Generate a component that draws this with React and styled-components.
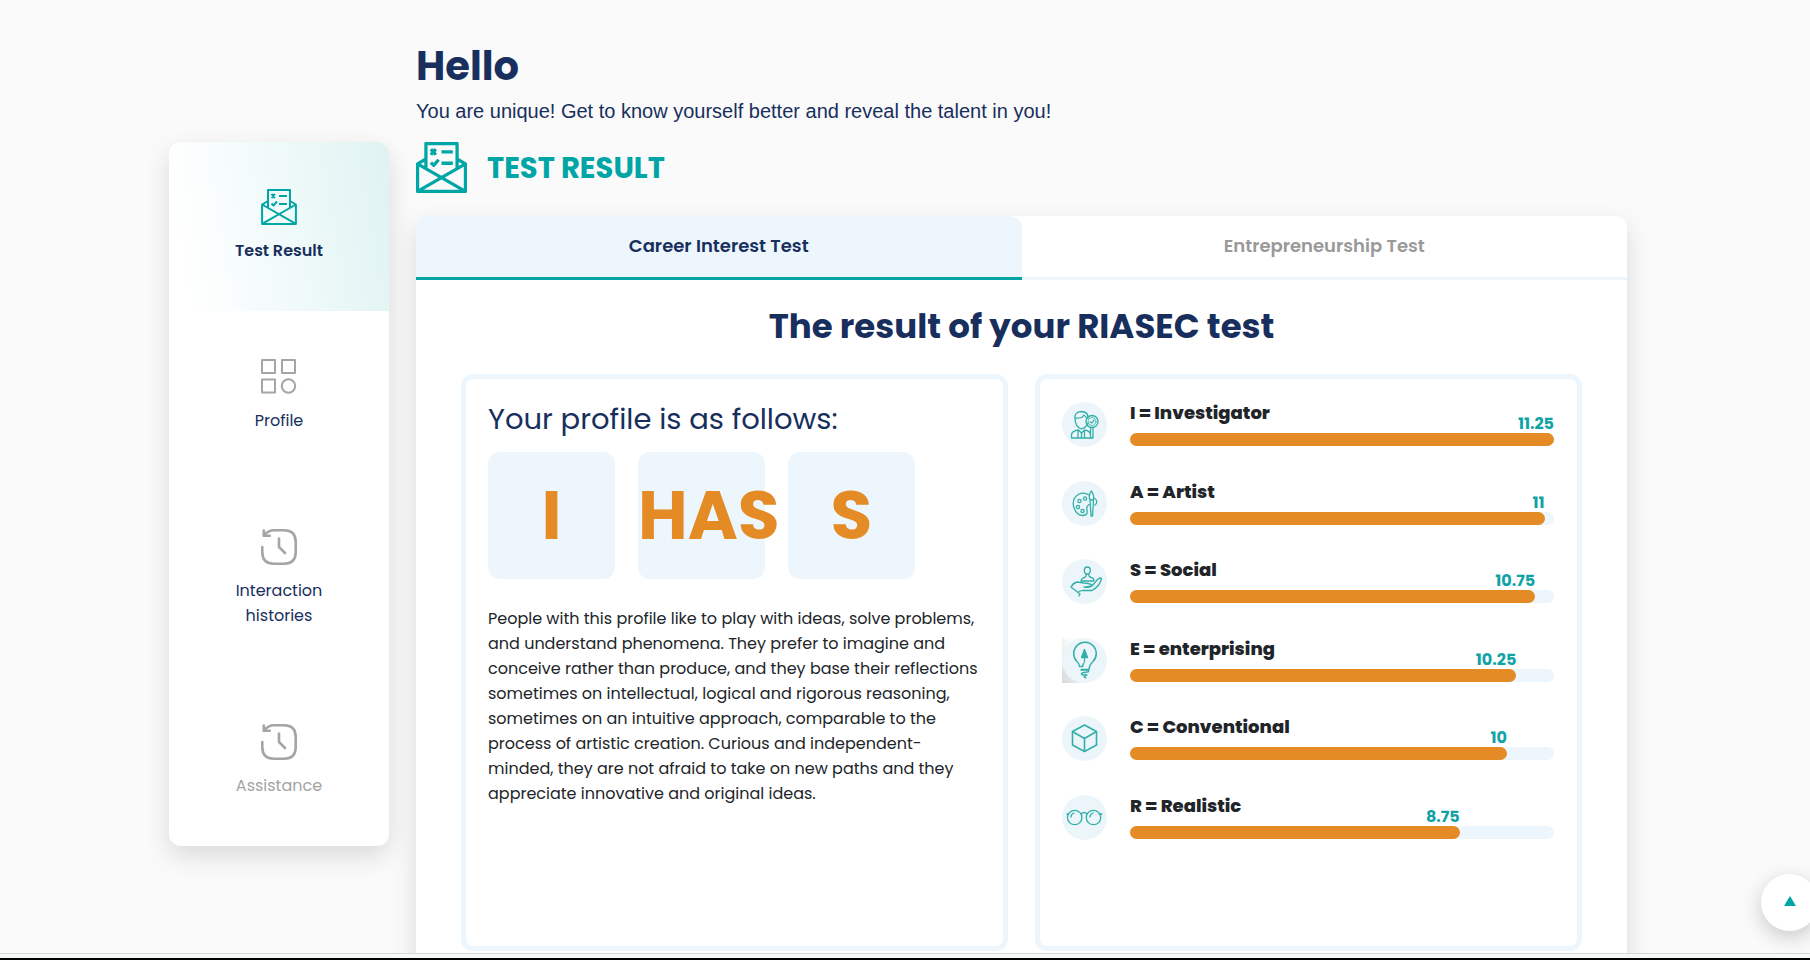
import React, { useState } from "react";
import styled, { createGlobalStyle } from "styled-components";

const navy = "#182f5d";
const teal = "#00a5a6";
const orange = "#e48b25";
const pale = "#ecf6fc";
const shadow = "0 10px 26px rgba(0, 0, 0, 0.13)";

const GlobalStyle = createGlobalStyle`
  * { box-sizing: border-box; }
  body {
    margin: 0;
    background: #fafafa;
    color: #212529;
    font-family: Poppins, Inter, "Open Sans", sans-serif;
    font-size: 16px;
  }
  h1, h2, h3, p, ul { margin: 0; padding: 0; }
`;

const Page = styled.div`
  height: 100vh;
  display: flex;
  flex-direction: column;
`;

const Viewport = styled.div`
  flex: 1;
  min-height: 0;
  overflow: hidden;
  padding-right: 14px;
`;

const BottomEdge = styled.div`
  height: 7px;
  flex: none;
  background: #f7f8f8;
  border-top: 1px solid #d5d8d8;
  border-bottom: 2px solid #000;
`;

const Container = styled.div`
  display: flex;
  align-items: flex-start;
  gap: 27px;
  max-width: 1458px;
  margin: 0 auto;
`;

const Sidebar = styled.nav`
  flex: none;
  width: 220px;
  margin-top: 142px;
  display: flex;
  flex-direction: column;
  gap: 1px;
  overflow: hidden;
  background: #fff;
  border-radius: 12px;
  box-shadow: ${shadow};
`;

const SideLink = styled.a`
  display: flex;
  flex-direction: column;
  align-items: center;
  gap: 13px;
  padding: 47px 50px 48px;
  text-align: center;
  text-decoration: none;
  font-size: 16px;
  line-height: 25px;
  font-weight: ${(p) => (p.$active ? 600 : 400)};
  color: ${(p) => (p.$muted ? "#a3a3a3" : navy)};
  background: ${(p) =>
    p.$active ? "linear-gradient(80deg, #fff 8%, #f1fafa 50%, #dff3f2 100%)" : "none"};
  svg { color: ${(p) => (p.$active ? teal : "#a5a5a5")}; }
`;

const Main = styled.main`
  flex: 1;
  min-width: 0;
  padding-top: 42px;
`;

const Hello = styled.h1`
  font-size: 40px;
  line-height: 48px;
  font-weight: 700;
  color: ${navy};
`;

const Intro = styled.p`
  margin-top: 6px;
  font-family: "Liberation Sans", Arial, sans-serif;
  font-size: 20px;
  line-height: 30px;
  color: ${navy};
`;

const SectionHead = styled.div`
  display: flex;
  align-items: center;
  gap: 20px;
  margin: 16px 0 23px;
  color: ${teal};
`;

const SectionTitle = styled.h2`
  font-size: 29px;
  line-height: 36px;
  font-weight: 700;
`;

const Card = styled.section`
  background: #fff;
  border-radius: 12px 12px 0 0;
  box-shadow: ${shadow};
`;

const Tabs = styled.div`
  display: flex;
`;

const Tab = styled.button`
  flex: 1;
  height: 64px;
  padding: 0 0 2px;
  border: 0;
  border-bottom: 3px solid ${(p) => (p.$active ? teal : pale)};
  border-radius: 12px 12px 0 0;
  background: ${(p) => (p.$active ? pale : "#fff")};
  color: ${(p) => (p.$active ? navy : "#999")};
  font: 600 18px/25px Poppins, Inter, sans-serif;
  cursor: pointer;
`;

const CardBody = styled.div`
  padding: 21px 45px 45px;
`;

const ResultTitle = styled.h2`
  text-align: center;
  font-size: 34px;
  line-height: 50px;
  font-weight: 700;
  color: ${navy};
`;

const Panels = styled.div`
  display: grid;
  grid-template-columns: 1fr 1fr;
  gap: 27px;
  margin-top: 23px;
`;

const Panel = styled.div`
  min-height: 577px;
  padding: 22px 23px 22px 22px;
  border: 5px solid ${pale};
  border-radius: 12px;
`;

const ProfileTitle = styled.h3`
  font-size: 29px;
  line-height: 36px;
  font-weight: 400;
  color: ${navy};
`;

const Tiles = styled.div`
  display: flex;
  gap: 23px;
  margin: 15px 0 27px;
`;

const Tile = styled.div`
  width: 127px;
  height: 127px;
  border-radius: 12px;
  background: ${pale};
  color: ${orange};
  font-size: 68px;
  line-height: 127px;
  font-weight: 700;
  text-align: center;
`;

const Description = styled.p`
  font-size: 16px;
  line-height: 25px;
`;

const Scores = styled.ul`
  display: flex;
  flex-direction: column;
  justify-content: space-between;
  height: 438px;
  margin-top: 1px;
  list-style: none;
`;

const ScoreRow = styled.li`
  display: flex;
  gap: 23px;
`;

const ScoreBody = styled.div`
  flex: 1;
`;

const ScoreHead = styled.div`
  display: grid;
  height: 31px;
`;

const ScoreName = styled.span`
  grid-area: 1 / 1;
  font-size: 18px;
  line-height: 22px;
  font-weight: 800;
`;

const ScoreValue = styled.span`
  grid-area: 1 / 1;
  align-self: end;
  text-align: right;
  font-size: 16px;
  line-height: 19px;
  font-weight: 700;
  color: #10a3a5;
`;

const Track = styled.div`
  height: 13px;
  border-radius: 7px;
  background: ${pale};
`;

const Fill = styled.div`
  height: 100%;
  border-radius: 7px;
  background: ${orange};
`;

const ToTop = styled.button`
  position: fixed;
  right: -8px;
  bottom: 29px;
  display: grid;
  place-items: center;
  width: 57px;
  height: 57px;
  padding: 0 0 3px;
  border: 0;
  border-radius: 50%;
  background: #fff;
  box-shadow: 0 6px 20px rgba(0, 0, 0, 0.2);
  cursor: pointer;
`;

const Envelope = ({ size, weight = 2 }) => (
  <svg width={size} height={size} viewBox="0 0 36 36" fill="none" stroke="currentColor" strokeWidth={weight} strokeLinejoin="round" aria-hidden="true">
    <path d="M7 19V1.100h22v17.900M7 12l-5.900 3.500V34.900h33.800V15.500l-5.900-3.500M1.100 15.500l33.800 19.400M34.900 15.500L1.100 34.900" />
    <path d="M10.500 5l3.500 4M14 5l-3.500 4M10.500 14.500l2 2 3.500-4M18 7h8M18 15h8" />
  </svg>
);

const Modules = () => (
  <svg width="36" height="36" viewBox="0 0 36 36" fill="none" stroke="currentColor" strokeWidth="2" strokeLinejoin="round" aria-hidden="true">
    <path d="M1 1h13v13H1zM21 1h13v13H21zM1 20.500h13v13H1z" />
    <circle cx="27.500" cy="27" r="6.700" />
  </svg>
);

const History = () => (
  <svg width="36" height="36" viewBox="0 0 36 36" fill="none" stroke="currentColor" strokeWidth="2.600" strokeLinecap="round" strokeLinejoin="round" aria-hidden="true">
    <path d="M1.300 18v5q0 11.700 11.700 11.700h10q11.700 0 11.700-11.700V13q0-11.700-11.700-11.700H13Q7 1.300 3 6.500" />
    <path d="M2.800 1.500v5.300h6M18 9.500V18l6 6" />
  </svg>
);

const drawings = {
  investigator: (
    <>
      <path d="M13 17q-1-7 6.500-7.500Q26 10 26 15M13 16q7 1 9-3 2 3 4 3M13 16q0 9 6.500 11Q25 25 26 21M9.500 36v-3q0-4 7-5l3 3 3-3q6 1 6 5v3zM16 28v8M22.500 28v8M19.500 31v5M28.500 25.500V36h2.500V25.500" />
      <circle cx="30" cy="19.500" r="6" />
      <circle cx="30" cy="19.500" r="4" strokeWidth="0.800" />
      <path d="M28 20l2 1 2-3" />
    </>
  ),
  artist: (
    <>
      <path d="M27 14q-5-3-10-1-7 4-5.500 12Q14 34.500 21 34.500q5-.5 4-5-1-4 2-6M29.500 10q-4 5-1 9h2.500q2-4-1.500-9zM28 19l1 16h1.500l1-16M32 17q5 3 1 7" />
      <circle cx="17.500" cy="20" r="1.600" />
      <circle cx="23" cy="17.500" r="1.600" />
      <circle cx="16" cy="26" r="1.600" />
      <circle cx="20.500" cy="30" r="1.600" />
    </>
  ),
  social: (
    <>
      <ellipse cx="25.300" cy="11.500" rx="3" ry="3.500" />
      <path d="M24 15q1 3-3 4-2 1-2 3M26.500 15q0 3 4 4 2 1 1 3M19 22h12M9 28q2-4 6-5l7 1q5 0 8 2-1 3-8 2M24 28l6-1 5-6q3-3 4.500-1.500Q38 27 30 31.500H20l-3 1M9 28l9 7-1 2" />
    </>
  ),
  enterprising: (
    <>
      <path d="M17.500 28.500q0-3-3-5.500A11.300 11.300 0 1 1 31 23.500q-3.500 3-4 8h-7.500M17.500 28.500h3l1-3" strokeWidth="1.500" />
      <path d="M22.500 11.500l-3 8h6zM22.500 19v5" fill="currentColor" />
      <path d="M19 32h7q2 2-1 2l-5 1q-2 2 2 2h3l-3 2 2 1" />
    </>
  ),
  conventional: (
    <path d="M22.500 9l12 6.500v13.500l-12 6.500-12-6.500V15.500zM10.500 15.500l12 7 12-7M22.500 22.500v13" strokeWidth="1.600" />
  ),
  realistic: (
    <>
      <circle cx="12.700" cy="22.500" r="7.200" />
      <circle cx="31.500" cy="22.500" r="7.200" />
      <path d="M5 19h2M19 19q3-3 6.500 0M37 19h3M9 22q0-3 3-4M28 22q0-3 3-4" />
    </>
  ),
};

const ScoreIcon = ({ kind }) => (
  <svg width="45" height="45" viewBox="0 0 45 45" fill="none" stroke="currentColor" strokeWidth="1.300" strokeLinecap="round" strokeLinejoin="round" color="#33afa9" aria-hidden="true">
    {kind === "enterprising" && (
      <>
        <linearGradient id="corner" x1="0" y1="1" x2="0.600" y2="0.300">
          <stop offset="0" stopColor="#d8d8d8" />
          <stop offset="1" stopColor="#fbfbfb" />
        </linearGradient>
        <path d="M0 0h22v45H0z" fill="url(#corner)" stroke="none" />
      </>
    )}
    <circle cx="22.500" cy="22.500" r="22.500" fill="#ebf5fa" stroke="none" />
    {drawings[kind]}
  </svg>
);

const MAX_SCORE = 11.25;
const scores = [
  ["investigator", "I = Investigator", 11.25],
  ["artist", "A = Artist", 11],
  ["social", "S = Social", 10.75],
  ["enterprising", "E = enterprising", 10.25],
  ["conventional", "C = Conventional", 10],
  ["realistic", "R = Realistic", 8.75],
];

export default function App() {
  const [tab, setTab] = useState("career");
  return (
    <Page>
      <GlobalStyle />
      <Viewport>
        <Container>
          <Sidebar>
            <SideLink href="#result" $active><Envelope size={36} />Test Result</SideLink>
            <SideLink href="#profile"><Modules />Profile</SideLink>
            <SideLink href="#history"><History />Interaction histories</SideLink>
            <SideLink href="#assistance" $muted><History />Assistance</SideLink>
          </Sidebar>
          <Main>
            <Hello>Hello</Hello>
            <Intro>You are unique! Get to know yourself better and reveal the talent in you!</Intro>
            <SectionHead>
              <Envelope size={51} weight={2.3} />
              <SectionTitle>TEST RESULT</SectionTitle>
            </SectionHead>
            <Card>
              <Tabs role="tablist">
                <Tab role="tab" aria-selected={tab === "career"} $active={tab === "career"} onClick={() => setTab("career")}>
                  Career Interest Test
                </Tab>
                <Tab role="tab" aria-selected={tab === "business"} $active={tab === "business"} onClick={() => setTab("business")}>
                  Entrepreneurship Test
                </Tab>
              </Tabs>
              <CardBody>
                <ResultTitle>The result of your RIASEC test</ResultTitle>
                <Panels>
                  <Panel>
                    <ProfileTitle>Your profile is as follows:</ProfileTitle>
                    <Tiles>
                      <Tile>I</Tile>
                      <Tile>HAS</Tile>
                      <Tile>S</Tile>
                    </Tiles>
                    <Description>
                      People with this profile like to play with ideas, solve problems,
                      and understand phenomena. They prefer to imagine and
                      conceive rather than produce, and they base their reflections
                      sometimes on intellectual, logical and rigorous reasoning,
                      sometimes on an intuitive approach, comparable to the
                      process of artistic creation. Curious and independent-minded,
                      they are not afraid to take on new paths and they
                      appreciate innovative and original ideas.
                    </Description>
                  </Panel>
                  <Panel>
                    <Scores>
                      {scores.map(([kind, name, value]) => {
                        const width = `${(value / MAX_SCORE) * 100}%`;
                        return (
                          <ScoreRow key={kind}>
                            <ScoreIcon kind={kind} />
                            <ScoreBody>
                              <ScoreHead>
                                <ScoreName>{name}</ScoreName>
                                <ScoreValue style={{ width }}>{value}</ScoreValue>
                              </ScoreHead>
                              <Track>
                                <Fill style={{ width }} />
                              </Track>
                            </ScoreBody>
                          </ScoreRow>
                        );
                      })}
                    </Scores>
                  </Panel>
                </Panels>
              </CardBody>
            </Card>
          </Main>
        </Container>
      </Viewport>
      <BottomEdge />
      <ToTop aria-label="Back to top">
        <svg width="12" height="10" viewBox="0 0 12 10" aria-hidden="true">
          <path d="M6 0l6 10H0z" fill={teal} />
        </svg>
      </ToTop>
    </Page>
  );
}
